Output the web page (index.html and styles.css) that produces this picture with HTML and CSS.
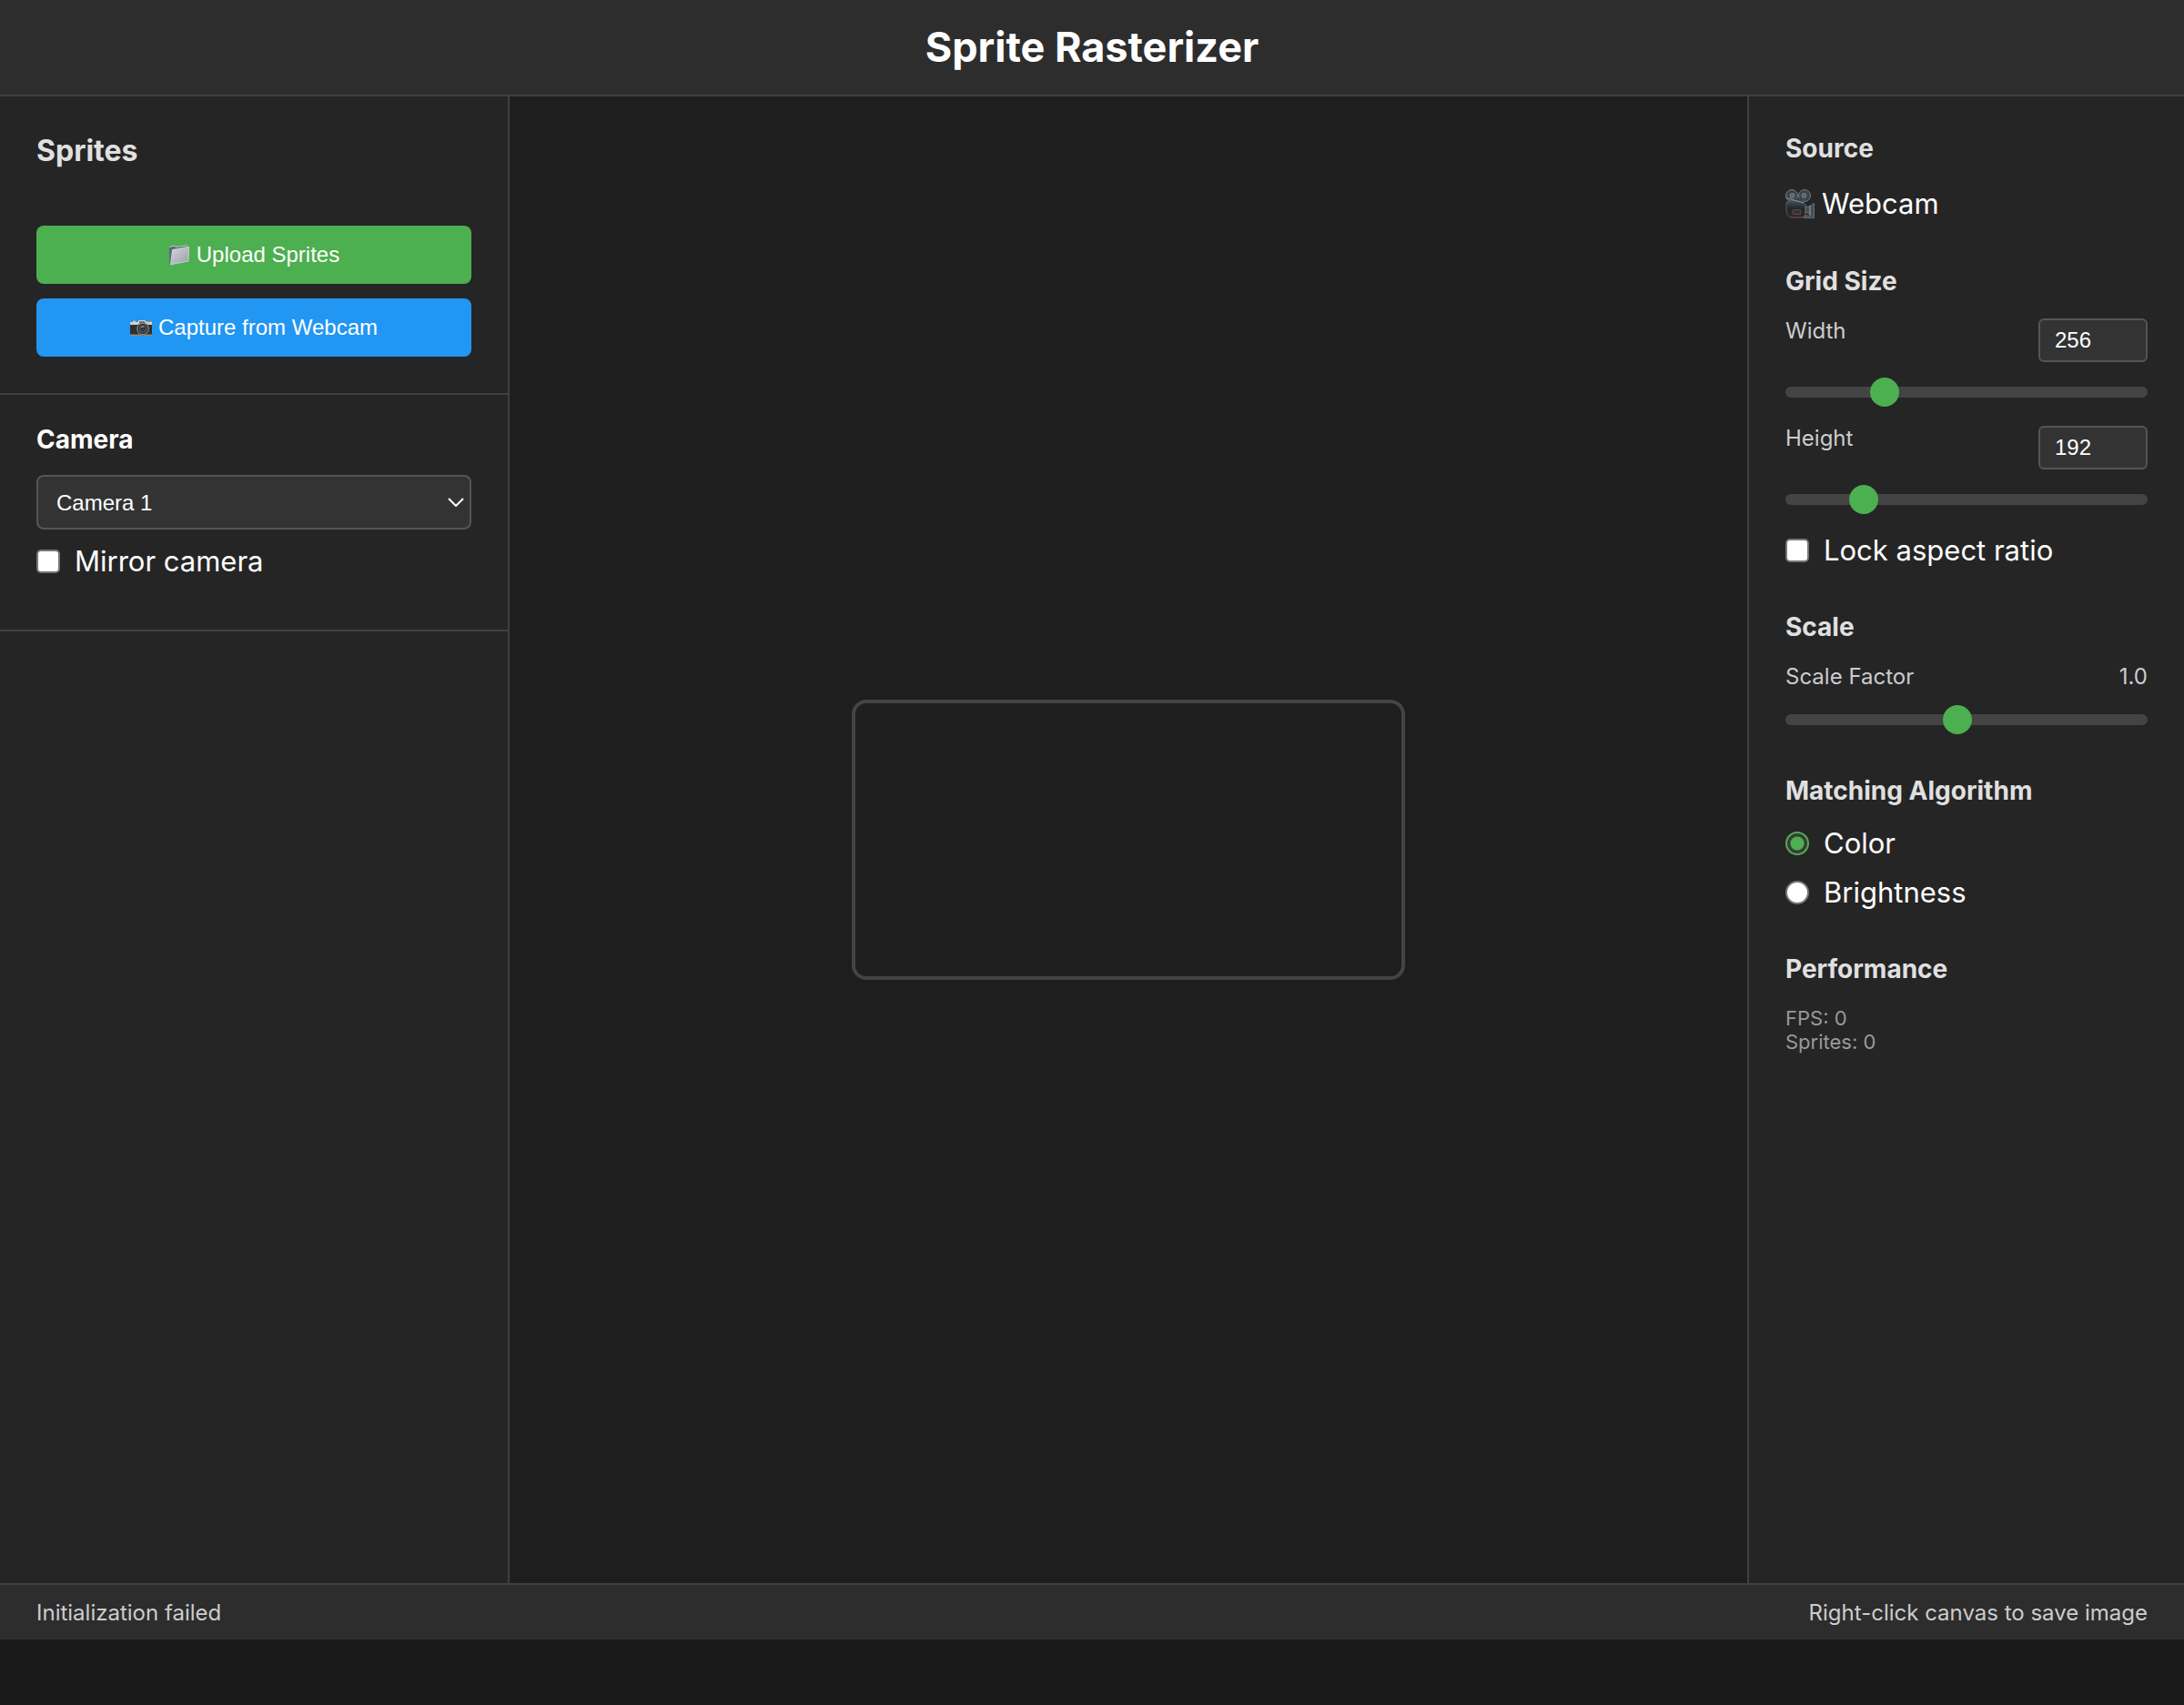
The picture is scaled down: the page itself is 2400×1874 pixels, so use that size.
FILE: index.html
```html
<!DOCTYPE html>
<html lang="en">
<head>
<meta charset="utf-8">
<meta name="viewport" content="width=device-width, initial-scale=1">
<title>Sprite Rasterizer</title>
<link rel="stylesheet" href="styles.css">
</head>
<body>
<header class="app-header">
  <h1 class="app-title">Sprite Rasterizer</h1>
</header>

<div class="workspace">
  <aside class="sprites-panel">
    <h2 class="panel-title">Sprites</h2>
    <section class="sprite-actions">
      <button type="button" class="btn btn-upload">
        <svg class="btn-icon" viewBox="0 0 24 24" aria-hidden="true">
          <defs>
            <linearGradient id="folder" x1="0" y1="0" x2="1" y2="1">
              <stop offset="0" stop-color="#d5d8de"/>
              <stop offset="1" stop-color="#989ca5"/>
            </linearGradient>
          </defs>
          <path d="M1 3.500 7 2l1 1.500 13-1.500.5 2L3 22 1.500 22.500z" fill="#56687d"/>
          <path d="M1 3.500 7 2l1 1.400L21 1.800" fill="none" stroke="#c5cdd5" stroke-width="1"/>
          <path d="M4.500 6.500 22.500 3.300 22 19 2.500 22.800z" fill="url(#folder)" stroke="#dfe2e6" stroke-width=".7"/>
        </svg>
        Upload Sprites
      </button>
      <button type="button" class="btn btn-capture">
        <svg class="btn-icon" viewBox="0 0 24 24" aria-hidden="true">
          <path d="M0 6h3V4.500h3V6h2l1.500-2h7L18 5.500h6V21H0z" fill="#303030"/>
          <path d="M0 6h3V4.500h3V6h2l1.500-2h7L18 5.500h6V9H0z" fill="#d2d2ce"/>
          <path d="M10 5h6v2.500h-6z" fill="#777"/>
          <path d="M19.500 6.300h3v1.700h-3z" fill="#eed35b"/>
          <path d="M0 19.500h24V21H0z" fill="#8b8b87"/>
          <circle cx="14" cy="13.500" r="7" fill="#555"/>
          <circle cx="14" cy="13.500" r="6" fill="#222" stroke="#aaa" stroke-width=".8"/>
          <circle cx="14" cy="13.500" r="3.800" fill="#303740" stroke="#777" stroke-width=".8"/>
          <path d="M12 12a3 3 0 0 1 3-1" fill="none" stroke="#a8b2bd" stroke-width="1"/>
        </svg>
        Capture from Webcam
      </button>
    </section>
    <section class="camera-section">
      <h3 class="section-title section-title-bright"><label for="camera">Camera</label></h3>
      <div class="select-wrap">
        <select id="camera" class="select">
          <option>Camera 1</option>
        </select>
        <svg class="select-arrow" viewBox="0 0 18 10" aria-hidden="true">
          <path d="M1 1l8 8 8-8" fill="none" stroke="#fff" stroke-width="2"/>
        </svg>
      </div>
      <label class="choice"><input type="checkbox" class="tick">Mirror camera</label>
    </section>
  </aside>

  <main class="stage">
    <canvas class="output" width="600" height="300"></canvas>
  </main>

  <aside class="settings-panel">
    <section>
      <h3 class="section-title">Source</h3>
      <p class="source">
        <svg class="source-icon" viewBox="0 0 32 32" aria-hidden="true">
          <defs>
            <linearGradient id="body" x1="0" y1="0" x2="0" y2="1">
              <stop offset="0" stop-color="#46535e"/>
              <stop offset=".5" stop-color="#222529"/>
              <stop offset="1" stop-color="#3a2524"/>
            </linearGradient>
          </defs>
          <circle cx="7" cy="7" r="6.500" fill="#3c444b" stroke="#747a80"/>
          <circle cx="21" cy="7" r="6.500" fill="#3c444b" stroke="#747a80"/>
          <path d="M9 10.500h10V13H9z" fill="#3c444b"/>
          <circle cx="7.500" cy="7" r="2.500" fill="#59636c" stroke="#8d949a" stroke-width=".7"/>
          <circle cx="20.500" cy="7" r="2.500" fill="#59636c" stroke="#8d949a" stroke-width=".7"/>
          <path d="M1 14.500 6 12l14 2.500 2 2V28l-3 3H6c-4-1-5-5-5-10z" fill="url(#body)" stroke="#626a71" stroke-width=".8"/>
          <path d="M1 9.500 20 15" stroke="#89939b" stroke-width="1"/>
          <path d="M22 19h4l5.500-3.500V31.500H20L22 29h6l-3-3h-3z" fill="#464d54" stroke="#717a82" stroke-width=".8"/>
          <path d="M27 18v10" stroke="#9ba2a8" stroke-width="1"/>
          <rect x="8" y="22.500" width="9" height="5" rx="1" fill="#30343a" stroke="#654b4a"/>
        </svg>
        Webcam
      </p>
    </section>

    <section class="controls">
      <h3 class="section-title">Grid Size</h3>
      <div class="control">
        <div class="control-row">
          <label for="grid-width">Width</label>
          <input id="grid-width" class="number" type="number" min="1" max="1000" value="256">
        </div>
        <input class="slider" type="range" min="1" max="1000" value="256" aria-label="Width">
      </div>
      <div class="control">
        <div class="control-row">
          <label for="grid-height">Height</label>
          <input id="grid-height" class="number" type="number" min="1" max="1000" value="192">
        </div>
        <input class="slider" type="range" min="1" max="1000" value="192" aria-label="Height">
      </div>
      <label class="choice"><input type="checkbox" class="tick">Lock aspect ratio</label>
    </section>

    <section>
      <h3 class="section-title">Scale</h3>
      <div class="control">
        <div class="control-row">
          <label for="scale">Scale Factor</label>
          <output for="scale">1.0</output>
        </div>
        <input id="scale" class="slider" type="range" min="0.1" max="2" step="0.1" value="1">
      </div>
    </section>

    <section class="algorithm">
      <h3 class="section-title">Matching Algorithm</h3>
      <div class="choices">
        <label class="choice"><input type="radio" class="tick tick-round" name="algorithm" checked>Color</label>
        <label class="choice"><input type="radio" class="tick tick-round" name="algorithm">Brightness</label>
      </div>
    </section>

    <section>
      <h3 class="section-title">Performance</h3>
      <div class="stats">
        <p>FPS: 0</p>
        <p>Sprites: 0</p>
      </div>
    </section>
  </aside>
</div>

<footer class="status-bar">
  <span>Initialization failed</span>
  <span>Right-click canvas to save image</span>
</footer>
</body>
</html>
```
FILE: styles.css
```css
* {
  box-sizing: border-box;
  margin: 0;
  padding: 0;
}

body {
  display: flex;
  flex-direction: column;
  min-height: 100vh;
  padding-bottom: 72px;
  background: #1a1a1a;
  color: #fff;
  font-family: Inter, "Liberation Sans", sans-serif;
  font-size: 31px;
  line-height: 38px;
}

.app-header {
  padding: 24px 40px;
  background: #2d2d2d;
  border-bottom: 2px solid #404040;
  text-align: center;
}

.app-title {
  font-size: 45px;
  line-height: 56px;
  font-weight: 700;
}

.workspace {
  display: grid;
  grid-template-columns: 560px 1fr 480px;
  flex: 1;
}

.sprites-panel {
  background: #252525;
  border-right: 2px solid #404040;
}

.panel-title {
  padding: 40px 40px 22px;
  color: #e0e0e0;
  font-size: 32px;
  line-height: 40px;
  font-weight: 700;
}

.sprite-actions {
  display: flex;
  flex-direction: column;
  gap: 16px;
  padding: 40px;
  border-bottom: 2px solid #404040;
}

.btn {
  display: flex;
  align-items: center;
  justify-content: center;
  gap: 7px;
  height: 64px;
  border: 0;
  border-radius: 8px;
  color: #fff;
  font-family: "Liberation Sans", Arial, sans-serif;
  font-size: 24px;
}

.btn-upload {
  background: #4caf50;
}

.btn-capture {
  background: #2196f3;
}

.btn-icon {
  width: 24px;
  height: 24px;
}

.camera-section {
  padding: 32px 40px 56px;
  border-bottom: 2px solid #404040;
}

.section-title {
  margin-bottom: 24px;
  color: #e0e0e0;
  font-size: 28px;
  line-height: 34px;
  font-weight: 700;
}

.section-title-bright {
  margin-bottom: 22px;
  color: #fff;
}

.select-wrap {
  position: relative;
  margin-bottom: 16px;
}

.select {
  display: block;
  width: 100%;
  height: 60px;
  padding: 0 20px;
  appearance: none;
  background: #333;
  border: 2px solid #555;
  border-radius: 8px;
  color: #fff;
  font-family: "Liberation Sans", Arial, sans-serif;
  font-size: 24px;
}

.select-arrow {
  position: absolute;
  top: 25px;
  right: 8px;
  width: 18px;
  height: 10px;
  pointer-events: none;
}

.choice {
  display: flex;
  align-items: center;
  gap: 16px;
}

.tick {
  width: 26px;
  height: 26px;
  appearance: none;
  background: #fff;
  border: 2px solid #767676;
  border-radius: 5px;
}

.tick-round {
  border-radius: 50%;
}

.tick:checked {
  background: radial-gradient(circle, #4caf50 7px, #3b3b3b 8px);
  border-color: #4caf50;
}

.stage {
  display: flex;
  align-items: center;
  justify-content: center;
  background: #1e1e1e;
}

.output {
  box-sizing: content-box;
  border: 4px solid #444;
  border-radius: 16px;
}

.settings-panel {
  display: flex;
  flex-direction: column;
  gap: 48px;
  padding: 40px;
  background: #252525;
  border-left: 2px solid #404040;
}

.source {
  display: flex;
  align-items: center;
  gap: 8px;
  line-height: 40px;
}

.source-icon {
  width: 32px;
  height: 32px;
}

.controls .control {
  margin-bottom: 24px;
}

.control-row {
  display: flex;
  justify-content: space-between;
  align-items: flex-start;
  margin-bottom: 20px;
  color: #ccc;
  font-size: 24px;
  line-height: 28px;
}

.number {
  width: 120px;
  height: 48px;
  padding: 0 16px;
  appearance: textfield;
  background: #333;
  border: 2px solid #555;
  border-radius: 6px;
  color: #fff;
  font-family: "Liberation Sans", Arial, sans-serif;
  font-size: 24px;
}

.slider {
  display: block;
  width: 100%;
  height: 26px;
  appearance: none;
  background: transparent;
}

.slider::-webkit-slider-runnable-track {
  height: 12px;
  background: #444;
  border-radius: 6px;
}

.slider::-webkit-slider-thumb {
  width: 32px;
  height: 32px;
  margin-top: -10px;
  appearance: none;
  background: #4caf50;
  border-radius: 50%;
}

.algorithm .section-title {
  margin-bottom: 22px;
}

.choices {
  display: flex;
  flex-direction: column;
  gap: 16px;
}

.stats {
  color: #999;
  font-size: 22px;
  line-height: 26px;
}

.status-bar {
  display: flex;
  justify-content: space-between;
  padding: 17px 40px 15px;
  background: #2d2d2d;
  border-top: 2px solid #404040;
  color: #ccc;
  font-size: 24px;
  line-height: 28px;
}
```
